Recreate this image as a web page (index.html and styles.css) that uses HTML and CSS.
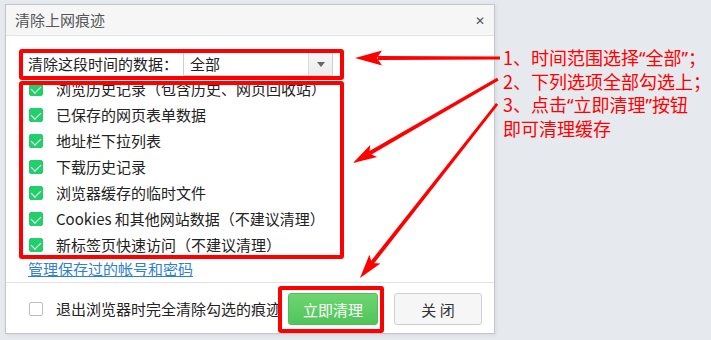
FILE: index.html
```html
<!DOCTYPE html>
<html lang="zh-CN">
<head>
  <meta charset="UTF-8" />
  <title>清除上网痕迹</title>
  <link rel="stylesheet" href="styles.css">
</head>
<body>
  <div class="page">
    <div class="dialog">
      <div class="dialog-header">
        <span class="dialog-title">清除上网痕迹</span>
        <span class="close-x">&#x2715;</span>
      </div>

      <div class="dialog-body">
        <div class="range-row">
          <span class="range-label">清除这段时间的数据：</span>
          <div class="select">
            <span class="select-value">全部</span>
            <span class="select-arrow"></span>
          </div>
        </div>

        <div class="options">
          <ul class="option-list">
            <li><span class="check on"></span>浏览历史记录（包含历史、网页回收站）</li>
            <li><span class="check on"></span>已保存的网页表单数据</li>
            <li><span class="check on"></span>地址栏下拉列表</li>
            <li><span class="check on"></span>下载历史记录</li>
            <li><span class="check on"></span>浏览器缓存的临时文件</li>
            <li><span class="check on"></span>Cookies 和其他网站数据（不建议清理）</li>
            <li><span class="check on"></span>新标签页快速访问（不建议清理）</li>
          </ul>
        </div>

        <a class="manage-link" href="#">管理保存过的帐号和密码</a>
      </div>

      <div class="dialog-footer">
        <span class="check"></span>
        <span class="exit-text">退出浏览器时完全清除勾选的痕迹</span>
        <button class="btn btn-green">立即清理</button>
        <button class="btn btn-plain">关 闭</button>
      </div>
    </div>

    <div class="notes">
      <p>1、时间范围选择<span class="q">“</span>全部<span class="q">”</span>；</p>
      <p>2、下列选项全部勾选上；</p>
      <p>3、点击<span class="q">“</span>立即清理<span class="q">”</span>按钮</p>
      <p>即可清理缓存</p>
    </div>

    <!-- annotations drawn over the dialog -->
    <div class="mark mark-range"></div>
    <div class="mark mark-list"></div>
    <div class="mark mark-button"></div>

    <svg class="arrows" width="711" height="340" viewBox="0 0 711 340">
      <g fill="#f00" stroke="none">
        <polygon points="500,56.6 500,59.4 378,60 378,56" />
        <polygon points="355,58 382,50.5 377,58 382,65.5" />

        <polygon points="497,77.8 498.6,80.4 370.6,155.1 368.2,151.7" />
        <polygon points="353,163 370.2,144.9 369.4,153.4 377.2,156.9" />

        <polygon points="496,103 498.2,104.8 373.4,264.3 370.2,261.9" />
        <polygon points="360,278 369.4,254.8 371.8,263.1 380.4,263.4" />
      </g>
    </svg>
  </div>
</body>
</html>
```

FILE: styles.css
```css
body {
  margin: 0;
  background: #e6e9ee;
  font-family: "Noto Sans CJK SC", "Noto Sans", sans-serif;
  font-size: 15px;
  color: #222;
}

.page {
  position: relative;
  width: 711px;
  height: 340px;
  display: flex;
  align-items: flex-start;
  overflow: hidden;
}

.dialog {
  flex-shrink: 0;
  margin: 4px 0 0 5px;
  width: 488px;
  height: 328px;
  background: #fff;
  border: 1px solid #c4c6ca;
  box-shadow: 1px 1px 4px rgba(0, 0, 0, 0.08);
  display: flex;
  flex-direction: column;
}

.dialog-header {
  height: 30px;
  background: #f6f6f6;
  border-bottom: 1px solid #e2e2e2;
  display: flex;
  align-items: center;
  justify-content: space-between;
  padding: 0 9px 0 9px;
}

.dialog-title {
  color: #555;
  line-height: 20px;
}

.close-x {
  color: #555;
  font-family: "DejaVu Sans", sans-serif;
  font-size: 12px;
  line-height: 12px;
  margin-top: 1px;
}

.dialog-body {
  height: 246px;
  padding: 16px 0 0 22px;
  box-sizing: border-box;
}

.range-row {
  display: flex;
  align-items: center;
  height: 24px;
}

.range-label {
  width: 155px;
  line-height: 20px;
}

.select {
  width: 148px;
  height: 22px;
  border: 1px solid #cfcfcf;
  display: flex;
  align-items: center;
}

.select-value {
  flex: 1;
  padding-left: 6px;
  line-height: 20px;
}

.select-arrow {
  width: 23px;
  height: 22px;
  border-left: 1px solid #dcdcdc;
  background: linear-gradient(#f8f8f8, #ececec);
  position: relative;
}

.select-arrow::after {
  content: "";
  position: absolute;
  left: 8px;
  top: 9px;
  border-left: 4px solid transparent;
  border-right: 4px solid transparent;
  border-top: 5px solid #666;
}

.options {
  margin-top: 6px;
  height: 176px;
  overflow: hidden;
}

.option-list {
  list-style: none;
  margin: -6px 0 0 0;
  padding: 0;
}

.option-list li {
  height: 26px;
  display: flex;
  align-items: center;
  line-height: 20px;
}

.check {
  width: 14px;
  height: 14px;
  box-sizing: border-box;
  border: 1px solid #bdbdbd;
  border-radius: 2px;
  background: #fff;
  margin: 0 13px 0 1px;
  flex-shrink: 0;
  position: relative;
}

.check.on {
  background: #21cf6b;
  border-color: #21cf6b;
}

.check.on::after {
  content: "";
  position: absolute;
  left: 3px;
  top: 1px;
  width: 5px;
  height: 8px;
  border-right: 1.6px solid #fff;
  border-bottom: 1.6px solid #fff;
  transform: rotate(45deg);
}

.manage-link {
  display: block;
  margin-top: 1px;
  width: max-content;
  color: #2f80d1;
  line-height: 20px;
  text-decoration: underline;
}

.dialog-footer {
  flex: 1;
  border-top: 1px solid #e2e2e2;
  display: flex;
  align-items: center;
  padding: 2px 12px 0 22px;
}

.exit-text {
  flex: 1;
  line-height: 20px;
  white-space: nowrap;
}

.btn {
  flex-shrink: 0;
  height: 32px;
  font-family: inherit;
  font-size: 15px;
  border-radius: 3px;
  padding: 0;
  cursor: pointer;
}

.btn-green {
  width: 90px;
  margin-right: 16px;
  color: #fff;
  border: 1px solid #4cbf57;
  background: linear-gradient(#6fd572, #4fc55a);
}

.btn-plain {
  width: 88px;
  color: #333;
  border: 1px solid #cfcfcf;
  background: #f6f6f6;
}

.notes {
  flex-shrink: 0;
  margin: 46px 0 0 8px;
  color: #f00;
  font-size: 18px;
}

.notes p {
  margin: 0;
  line-height: 23px;
  white-space: nowrap;
}

.notes .q {
  font-family: "Noto Sans", sans-serif;
}

.mark {
  position: absolute;
  border: 4px solid #f00;
  border-radius: 3px;
  box-sizing: border-box;
}

.mark-range {
  left: 19px;
  top: 49px;
  width: 325px;
  height: 31px;
}

.mark-list {
  left: 19px;
  top: 81px;
  width: 325px;
  height: 178px;
}

.mark-button {
  left: 278px;
  top: 286px;
  width: 106px;
  height: 47px;
}

.arrows {
  position: absolute;
  left: 0;
  top: 0;
  pointer-events: none;
}
```
